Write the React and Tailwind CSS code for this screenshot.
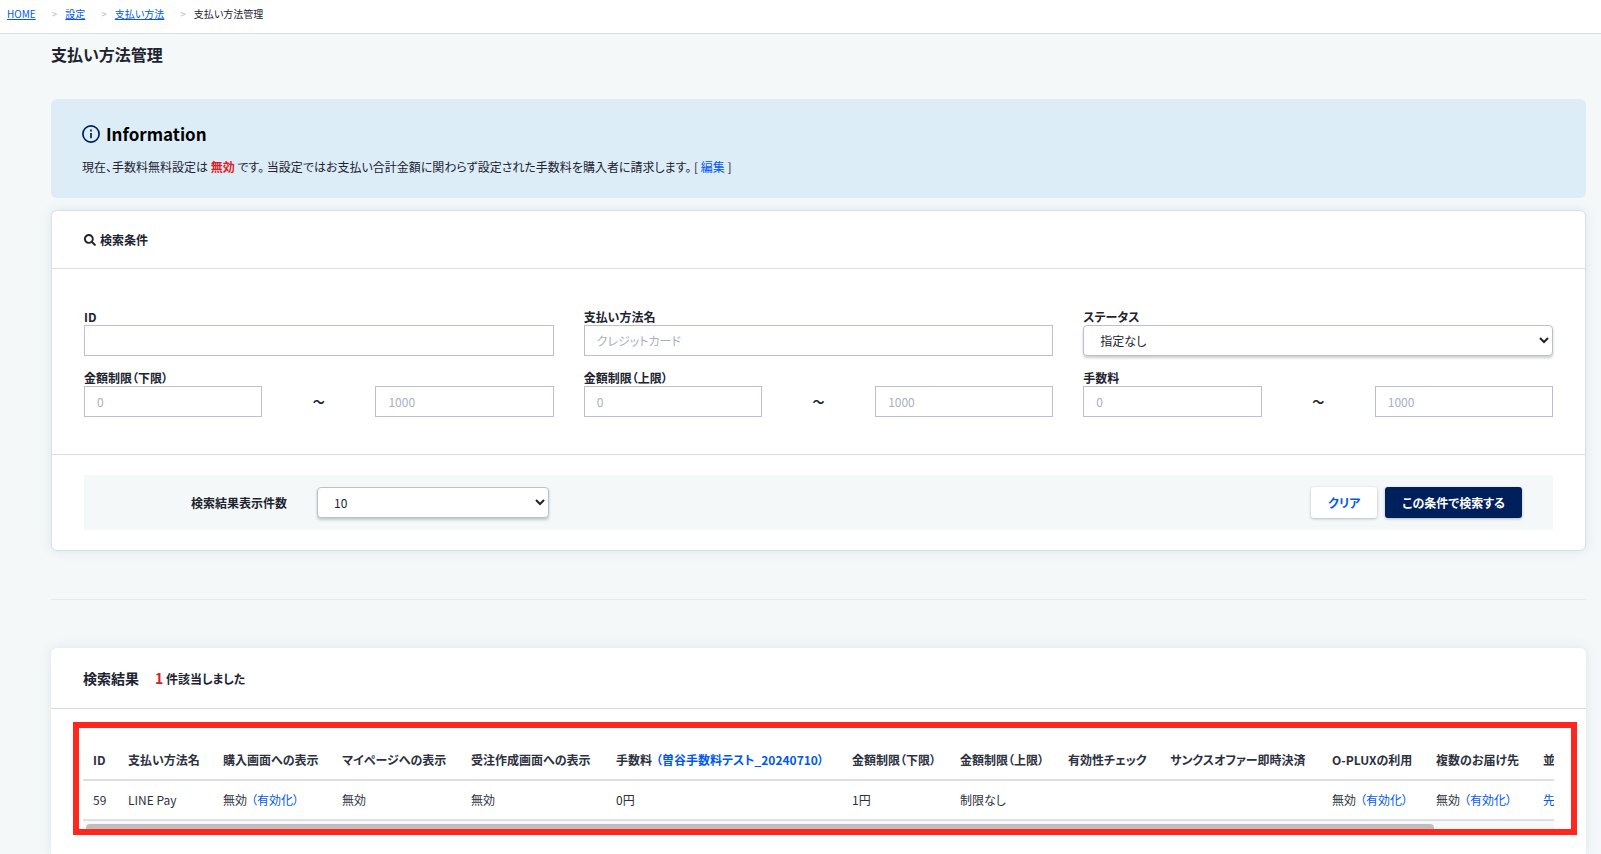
import { FaSearch } from "react-icons/fa";

const crumbs = ["HOME", "設定", "支払い方法"];

const columns = [
  { label: "ID", width: "w-[35px]" },
  { label: "支払い方法名", width: "w-[95px]" },
  { label: "購入画面への表示", width: "w-[119px]" },
  { label: "マイページへの表示", width: "w-[129px]" },
  { label: "受注作成画面への表示", width: "w-[145px]" },
  { label: "手数料", link: "（曽谷手数料テスト_20240710）", width: "w-[236px]" },
  { label: "金額制限（下限）", width: "w-[108px]" },
  { label: "金額制限（上限）", width: "w-[108px]" },
  { label: "有効性チェック", width: "w-[102px]" },
  { label: "サンクスオファー即時決済", width: "w-[162px]" },
  { label: "O-PLUXの利用", width: "w-[104px]" },
  { label: "複数のお届け先", width: "w-[107px]" },
  { label: "並", width: "w-[160px]" }
];

const rows = [
  [
    { text: "59" },
    { text: "LINE Pay" },
    { text: "無効", link: "（有効化）" },
    { text: "無効" },
    { text: "無効" },
    { text: "0円" },
    { text: "1円" },
    { text: "制限なし" },
    {},
    {},
    { text: "無効", link: "（有効化）" },
    { text: "無効", link: "（有効化）" },
    { link: "先" }
  ]
];

function Field({ id, label, children }) {
  return (
    <div>
      <label htmlFor={id} className="block text-[12px] leading-[17px] font-bold">
        {label}
      </label>
      {children}
    </div>
  );
}

function TextInput({ className = "", ...props }) {
  return (
    <input
      type="text"
      className={`block h-[31px] w-full min-w-0 border border-[#bbc0d0] bg-white px-3 text-[12px] placeholder:text-[#a9afc3] ${className}`}
      {...props}
    />
  );
}

function Select({ id, children }) {
  return (
    <select
      id={id}
      className="block h-[31px] w-full rounded-sm border border-[#bbc0d0] bg-white pl-3 text-[12px] shadow-[0_2px_3px_rgba(0,0,0,0.2)]"
    >
      {children}
    </select>
  );
}

function RangeField({ id, label }) {
  return (
    <Field id={id} label={label}>
      <div className="grid grid-cols-12 items-center gap-x-[30px]">
        <TextInput id={id} placeholder="0" className="col-span-5" />
        <span className="col-span-2 text-center text-[12px] font-bold">～</span>
        <TextInput aria-label={`${label} 最大`} placeholder="1000" className="col-span-5" />
      </div>
    </Field>
  );
}

function InfoIcon() {
  return (
    <svg viewBox="0 0 18 18" className="size-[18px]" fill="none" aria-hidden="true">
      <circle cx="9" cy="9" r="8.1" stroke="#00205b" strokeWidth="1.7" />
      <path d="M9 8v5.2M9 4.6v1.8" stroke="#00205b" strokeWidth="1.7" />
    </svg>
  );
}

export default function App() {
  return (
    <div
      lang="ja"
      className="flex min-h-screen flex-col bg-[#f4f8f9] font-['Noto_Sans_CJK_JP',sans-serif] text-[12px] text-[#20232f] [font-feature-settings:'palt']"
    >
      <nav className="border-b border-[#dcdde5] bg-white pt-1.5 pb-[11px] pl-[7px]">
        <ol className="flex text-[10px] leading-4">
          {crumbs.map((crumb) => (
            <li key={crumb} className="flex">
              <a href="#" className="text-[#0058f0] underline">
                {crumb}
              </a>
              <span className="pr-2 pl-4 text-[#b5b9ca]">&gt;</span>
            </li>
          ))}
          <li>支払い方法管理</li>
        </ol>
      </nav>

      <main className="flex grow flex-col pr-[15px] pl-[51px]">
        <h1 className="mt-2 text-[16px] leading-6 font-bold">支払い方法管理</h1>

        <section className="mt-[33px] rounded-md bg-[#ddedf8] px-[31px] pt-[23px] pb-5">
          <h2 className="flex items-center gap-1.5 text-[17px] leading-6 font-bold text-black">
            <InfoIcon />
            Information
          </h2>
          <p className="mt-2.5 text-[12px] leading-[22px]">
            現在、手数料無料設定は <strong className="text-[#e01b22]">無効</strong>{" "}
            です。 当設定ではお支払い合計金額に関わらず設定された手数料を購入者に請求します。 [{" "}
            <a href="#" className="text-[#0058f0]">
              編集
            </a>{" "}
            ]
          </p>
        </section>

        <form className="mt-3 rounded-md border border-[#dadeea] bg-white shadow-[0_0_12px_rgba(90,110,140,0.14)]">
          <h2 className="flex items-center gap-1 border-b border-[#dadeea] px-8 py-[18px] text-[12px] leading-[21px] font-bold">
            <FaSearch size={12} />
            検索条件
          </h2>

          <div className="grid grid-cols-3 gap-x-[30px] gap-y-[13px] px-8 pt-[39px] pb-[37px]">
            <Field id="pay-id" label="ID">
              <TextInput id="pay-id" />
            </Field>
            <Field id="pay-name" label="支払い方法名">
              <TextInput id="pay-name" placeholder="クレジットカード" />
            </Field>
            <Field id="pay-status" label="ステータス">
              <Select id="pay-status">
                <option>指定なし</option>
              </Select>
            </Field>
            <RangeField id="min-amount" label="金額制限（下限）" />
            <RangeField id="max-amount" label="金額制限（上限）" />
            <RangeField id="fee" label="手数料" />
          </div>

          <div className="border-t border-[#d9dbe0] px-8 py-5">
            <div className="flex items-center bg-[#f4f8f9] px-[31px] py-3">
              <label htmlFor="per-page" className="w-[172px] text-right font-bold">
                検索結果表示件数
              </label>
              <div className="ml-[30px] w-[232px]">
                <Select id="per-page">
                  <option>10</option>
                </Select>
              </div>
              <div className="ml-auto flex gap-2">
                <button
                  type="reset"
                  className="h-[31px] rounded-[3px] bg-white px-[17px] font-bold text-[#0058f0] shadow-[0_1px_3px_rgba(0,0,0,0.25)]"
                >
                  クリア
                </button>
                <button
                  type="button"
                  className="h-[31px] rounded-[3px] bg-[#00205b] px-[17px] font-bold text-white shadow-[0_1px_3px_rgba(0,0,0,0.25)]"
                >
                  この条件で検索する
                </button>
              </div>
            </div>
          </div>
        </form>

        <hr className="my-12 border-[#e6eaec]" />

        <section className="grow rounded-t-md bg-white pb-[19px] shadow-[0_0_12px_rgba(90,110,140,0.14)]">
          <div className="flex items-baseline border-b border-[#d9dbe0] px-8 pt-[18px] pb-[17px] leading-6 font-bold">
            <h2 className="text-[14px]">検索結果</h2>
            <p className="ml-4">
              <span className="text-[14px] text-[#e01b22]">1</span> 件該当しました
            </p>
          </div>

          <div className="mt-[13px] mr-[9px] ml-[22px] border-[6px] border-[#ff261e] pr-[17px] pl-1">
            <div className="overflow-hidden">
              <table className="w-[1610px] table-fixed border-collapse text-left whitespace-nowrap text-[#2c3140]">
                <thead>
                  <tr className="border-b-2 border-[#dcdfe4]">
                    {columns.map((col) => (
                      <th key={col.label} className={`${col.width} h-[52px] pt-3 pl-2.5 font-bold`}>
                        {col.label}
                        {col.link ? (
                          <a href="#" className="ml-1 text-[#0058f0]">
                            {col.link}
                          </a>
                        ) : null}
                      </th>
                    ))}
                  </tr>
                </thead>
                <tbody>
                  {rows.map((row, rowIndex) => (
                    <tr key={rowIndex} className="border-b-2 border-[#dcdfe4]">
                      {row.map((cell, index) => (
                        <td key={index} className="h-10 pl-2.5">
                          {cell.text}
                          {cell.link ? (
                            <a href="#" className={cell.text ? "ml-1 text-[#0058f0]" : "text-[#0058f0]"}>
                              {cell.link}
                            </a>
                          ) : null}
                        </td>
                      ))}
                    </tr>
                  ))}
                </tbody>
              </table>
              <div className="bg-[#f8f8f8] px-[3px] pt-[3px]">
                <div className="h-[5px] w-[92%] rounded-t-[4px] bg-[#bfbfbf]" />
              </div>
            </div>
          </div>
        </section>
      </main>
    </div>
  );
}
